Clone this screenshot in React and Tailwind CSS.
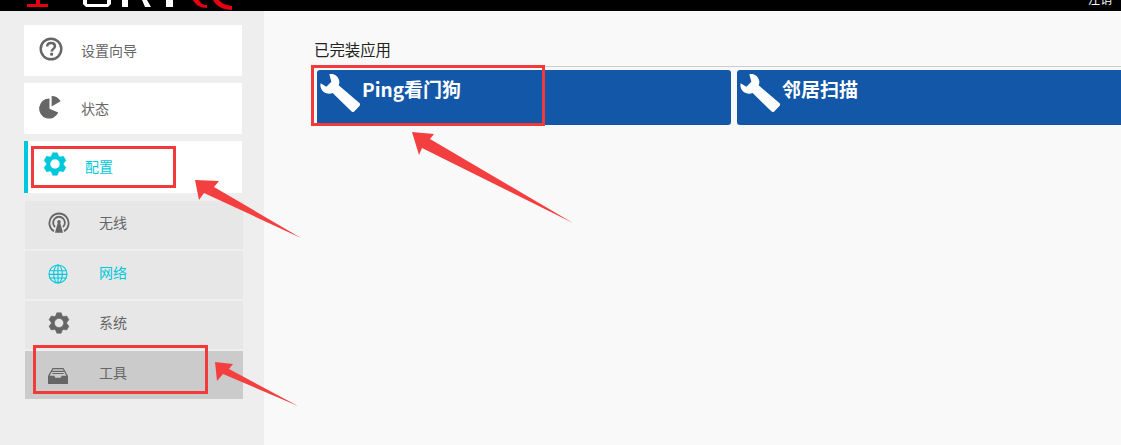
const font = { fontFamily: '"Noto Sans CJK SC", "Liberation Sans", sans-serif' };

// six-tooth gear outline, centre 12,12
const polar = (r, deg) => {
  const a = (deg * Math.PI) / 180;
  return `${(12 + r * Math.cos(a)).toFixed(2)} ${(12 + r * Math.sin(a)).toFixed(2)}`;
};
const gearPath =
  [0, 1, 2, 3, 4, 5]
    .map((i) => {
      const a = -90 + i * 60;
      return `${i === 0 ? "M" : "L"}${polar(8.6, a - 25)}L${polar(11.4, a - 12)}L${polar(11.4, a + 12)}L${polar(8.6, a + 25)}`;
    })
    .join("") + "ZM12 7a5 5 0 1 0 0 10a5 5 0 1 0 0-10Z";

const GearIcon = ({ className }) => (
  <svg viewBox="0 0 24 24" className={className}>
    <path d={gearPath} fill="currentColor" stroke="currentColor" strokeWidth="0.6" strokeLinejoin="round" fillRule="evenodd" />
  </svg>
);

const HelpIcon = () => (
  <svg viewBox="0 0 24 24" className="h-[24px] w-[24px]">
    <circle cx="12" cy="12" r="10.3" fill="none" stroke="#666" strokeWidth="2.4" />
    <path d="M8.2 9.6c0-2.4 1.7-3.5 3.9-3.5s3.8 1.2 3.8 3.2c0 2.9-3.2 2.7-3.2 5.1" fill="none" stroke="#666" strokeWidth="2.5" />
    <rect x="11.2" y="15.8" width="2.8" height="2.8" fill="#666" />
  </svg>
);

const PieIcon = () => (
  <svg viewBox="0 0 24 24" className="h-[24px] w-[24px]">
    <path d="M10.5 3.6v10.2l8.8 3.8A10 10 0 1 1 10.5 3.6z" fill="#666" />
    <path d="M12.6 1v10.4l9-5.2A10.6 10.6 0 0 0 12.6 1z" fill="#666" />
  </svg>
);

const TowerIcon = () => (
  <svg viewBox="0 0 22 22" className="h-[22px] w-[22px]" fill="none" stroke="#666">
    <path d="M6 19.3A9.6 9.6 0 1 1 16 19.3" strokeWidth="1.8" />
    <path d="M7 15A5.9 5.9 0 1 1 15 15" strokeWidth="1.8" />
    <circle cx="11" cy="9.8" r="1.7" fill="#666" stroke="none" />
    <path d="M10 10h2l3 10.8H7z" fill="#666" stroke="none" />
  </svg>
);

const GlobeIcon = () => (
  <svg viewBox="0 0 20 20" className="h-[20px] w-[20px]" fill="none" stroke="#00c8dc" strokeWidth="1.1">
    <circle cx="10" cy="10" r="9" />
    <ellipse cx="10" cy="10" rx="4.3" ry="9" />
    <path d="M10 1v18M1.6 6.8h16.8M1 10.4h18M1.8 14h16.4" />
  </svg>
);

const TrayIcon = () => (
  <svg viewBox="0 0 20 16" className="h-[16px] w-[20px]">
    <path d="M4.5 0h11L20 8v8H0V8z" fill="#666" />
    <path d="M5 1.3h10l.7 1.4H4.3zM3.6 4h12.8l1.9 3.8h-4.6l-1 2H7.3l-1-2H1.7z" fill="#cbcbcb" />
    <path d="M4.6 4.9h10.8l.5 1H4.1z" fill="#666" />
  </svg>
);

const WrenchIcon = () => (
  <svg viewBox="12 15 120 120" className="ml-[3px] mt-[3px] h-[40px] w-[40px] flex-none">
    <path
      d="M40 19C54 16 65 24 69 36C71 43 70 48 68 52L131 106Q134 110 131 113L114 131Q110 134 106 130L50 75C40 79 28 77 20 69C14 62 12 55 14 46L31 56L46 41Z"
      fill="#fff"
    />
  </svg>
);

const MainItem = ({ icon, label, active, className }) => (
  <div className={`flex items-center bg-white ${active ? "h-[52px] border-l-4 border-[#00c8dc] pb-[2px] text-[#00c8dc]" : "h-[51px] text-[#666]"} ${className}`}>
    {icon}
    <span className="text-[14px]">{label}</span>
  </div>
);

const SubItem = ({ icon, label, active, selected, iconClass = "" }) => (
  <div className={`flex h-[48px] items-center pb-[6px] ${selected ? "bg-[#cbcbcb]" : "bg-[#e7e7e7]"}`}>
    <span className={`ml-[23px] flex w-[51px] items-center ${iconClass}`}>{icon}</span>
    <span className={`text-[14px] ${active ? "text-[#00c8dc]" : "text-[#666]"}`}>{label}</span>
  </div>
);

const Tile = ({ label }) => (
  <div className="flex h-[55px] w-[414px] flex-none items-start rounded-[3px] bg-[#1358a8] text-white">
    <WrenchIcon />
    <span className="ml-[2px] mt-[5px] text-[19px] font-bold leading-[27px]">{label}</span>
  </div>
);

export default function App() {
  return (
    <div className="relative flex h-[445px] w-[1121px] flex-col overflow-hidden bg-[#f9f9f9]" style={font}>
      {/* top bar, cut off by the screenshot */}
      <header className="flex h-[11px] flex-none items-start justify-between overflow-hidden bg-black">
        <svg width="240" height="11" viewBox="0 0 240 11">
          <path d="M27 4h9V0h4v4h8v3H27z" fill="#e60012" />
          <path d="M83 0h4v4h20V0h4v4l-3 3H86l-3-3zM122 0h6v7h-6zM142 0h5l4 7h-6zM166 0h7v7h-7z" fill="#fff" />
          <path d="M193 0h6c1 3 4 5 8 5v3c-6 0-12-3-14-8zM213 0h6c2 3 6 5 13 6v4c-9 0-16-4-19-10z" fill="#e60012" />
        </svg>
        <span className="mr-[9px] -mt-[7px] text-[12px] leading-[12px] text-white">注销</span>
      </header>

      <div className="flex min-h-0 flex-1">
        <aside className="w-[264px] flex-none bg-[#eeeeee] pt-[14px]">
          <div className="ml-[24px] w-[218px]">
            <MainItem className="pl-[15px] [&>svg]:mr-[18px] [&>svg]:-mt-[3px]" icon={<HelpIcon />} label="设置向导" />
            <MainItem className="mt-[7px] pl-[15px] [&>svg]:mr-[18px] [&>svg]:-mt-[3px]" icon={<PieIcon />} label="状态" />
            <MainItem
              active
              className="mt-[7px] pl-[15px] [&>svg]:mr-[18px] [&>svg]:-mt-[4px]"
              icon={<GearIcon className="h-[24px] w-[24px]" />}
              label="配置"
            />
          </div>
          <div className="ml-[25px] mt-[8px] flex w-[218px] flex-col gap-[2px]">
            <SubItem icon={<TowerIcon />} label="无线" iconClass="mt-[2px]" />
            <SubItem icon={<GlobeIcon />} label="网络" active iconClass="mt-[3px]" />
            <SubItem icon={<GearIcon className="h-[22px] w-[22px] text-[#666]" />} label="系统" iconClass="mt-[1px]" />
            <SubItem icon={<TrayIcon />} label="工具" selected iconClass="mt-[7px]" />
          </div>
        </aside>

        <main className="min-w-0 flex-1 pl-[50px] pt-[28px]">
          <h2 className="text-[15.4px] font-normal leading-[21px] text-[#222]">已完装应用</h2>
          <div className="mt-[6px] h-px bg-[#cccccc]" />
          <div className="ml-[3px] mt-[3px] flex gap-[6px]">
            <Tile label="Ping看门狗" />
            <Tile label="邻居扫描" />
          </div>
        </main>
      </div>

      {/* red annotations drawn over the screenshot */}
      <div className="absolute left-[31px] top-[146px] h-[42px] w-[145px] border-[3px] border-[#f33a3a]" />
      <div className="absolute left-[33px] top-[345px] h-[49px] w-[175px] border-[3px] border-[#f33a3a]" />
      <div className="absolute left-[311px] top-[65px] h-[61px] w-[234px] border-[3px] border-[#f33a3a]" />
      <svg className="pointer-events-none absolute left-0 top-0" width="1121" height="445" viewBox="0 0 1121 445">
        <path d="M195 180l24 1-5 6 87 51-97-45-5 7z" fill="#f33f3f" />
        <path d="M215 362l18 2-4 5 69 37-75-32-6 7z" fill="#f33f3f" />
        <path d="M412 132l22 2-4 5 143 84-151-75-3 7z" fill="#f33f3f" />
      </svg>
    </div>
  );
}
